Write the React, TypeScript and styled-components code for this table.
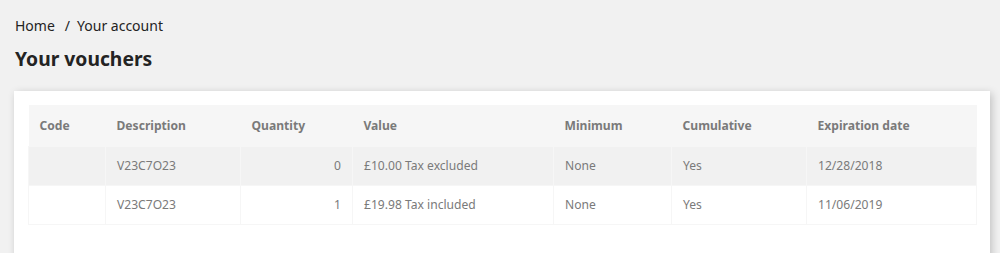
import React from 'react';
import styled, { createGlobalStyle } from 'styled-components';

const GlobalStyle = createGlobalStyle`
    html, body {
        margin: 0;
        padding: 0;
        background: #f1f1f1;
        font-family: "Noto Sans", "Open Sans", sans-serif;
        color: #232323;
    }
`;

const Page = styled.div`
    padding: 15px 10px 0 14px;
`;

const Breadcrumb = styled.nav`
    display: flex;
    align-items: center;
    font-size: 14px;
    line-height: 22px;
    padding-left: 1px;
    color: #232323;
`;

const Separator = styled.span`
    margin: 0 7px 0 10px;
`;

const Title = styled.h1`
    margin: 8px 0 0 1px;
    font-size: 19.3px;
    line-height: 28px;
    font-weight: 700;
    color: #232323;
`;

const Card = styled.section`
    margin-top: 18px;
    background: #fff;
    box-shadow: 2px 2px 8px 0 rgba(0, 0, 0, 0.2);
    padding: 14px 14px 40px;
`;

const Table = styled.table`
    width: 100%;
    table-layout: fixed;
    border-collapse: collapse;
    font-size: 12.1px;
    color: #7a7a7a;
`;

const HeadCell = styled.th`
    background: #f6f6f6;
    text-align: left;
    font-weight: 700;
    height: 41px;
    padding: 0 11px;
    box-sizing: border-box;
    white-space: nowrap;
`;

const Row = styled.tr<{ $striped?: boolean }>`
    background: ${(p) => (p.$striped ? '#f1f1f1' : '#fff')};
`;

const Cell = styled.td<{ $align?: 'left' | 'right' }>`
    border: 1px solid #f6f6f6;
    height: 39px;
    padding: 0 11px;
    box-sizing: border-box;
    text-align: ${(p) => p.$align ?? 'left'};
    white-space: nowrap;
`;

const columns = [
    { label: 'Code', width: 77 },
    { label: 'Description', width: 135 },
    { label: 'Quantity', width: 112 },
    { label: 'Value', width: 201 },
    { label: 'Minimum', width: 118 },
    { label: 'Cumulative', width: 135 },
    { label: 'Expiration date', width: 170 },
];

const vouchers = [
    { code: '', name: 'V23C7O23', quantity: 0, value: '£10.00 Tax excluded', minimum: 'None', cumulative: 'Yes', expires: '12/28/2018' },
    { code: '', name: 'V23C7O23', quantity: 1, value: '£19.98 Tax included', minimum: 'None', cumulative: 'Yes', expires: '11/06/2019' },
];

export default function App() {
    return (
        <Page>
            <GlobalStyle />
            <Breadcrumb>
                <span>Home</span>
                <Separator>/</Separator>
                <span>Your account</span>
            </Breadcrumb>
            <Title>Your vouchers</Title>
            <Card>
                <Table>
                    <colgroup>
                        {columns.map((c) => (
                            <col key={c.label} style={{ width: c.width }} />
                        ))}
                    </colgroup>
                    <thead>
                        <tr>
                            {columns.map((c) => (
                                <HeadCell key={c.label}>{c.label}</HeadCell>
                            ))}
                        </tr>
                    </thead>
                    <tbody>
                        {vouchers.map((v, i) => (
                            <Row key={v.expires} $striped={i % 2 === 0}>
                                <Cell>{v.code}</Cell>
                                <Cell>{v.name}</Cell>
                                <Cell $align="right">{v.quantity}</Cell>
                                <Cell>{v.value}</Cell>
                                <Cell>{v.minimum}</Cell>
                                <Cell>{v.cumulative}</Cell>
                                <Cell>{v.expires}</Cell>
                            </Row>
                        ))}
                    </tbody>
                </Table>
            </Card>
        </Page>
    );
}
